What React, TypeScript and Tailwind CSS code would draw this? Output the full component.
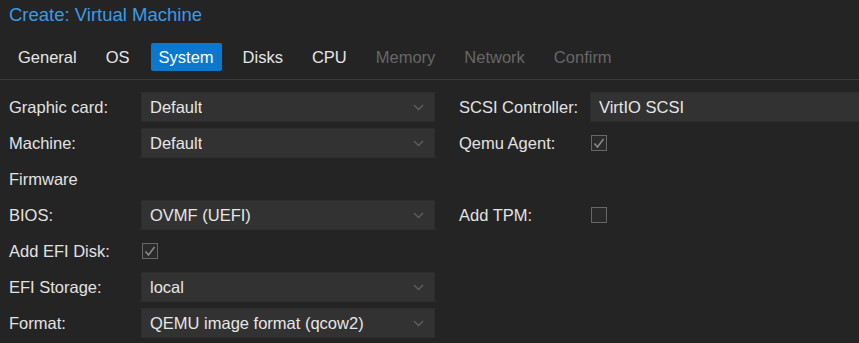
import { ReactNode } from 'react';

const tabs = [
  { label: 'General', state: 'normal' },
  { label: 'OS', state: 'normal' },
  { label: 'System', state: 'active' },
  { label: 'Disks', state: 'normal' },
  { label: 'CPU', state: 'normal' },
  { label: 'Memory', state: 'disabled' },
  { label: 'Network', state: 'disabled' },
  { label: 'Confirm', state: 'disabled' },
];

function Chevron() {
  return (
    <svg width="11" height="7" viewBox="0 0 11 7" className="flex-shrink-0">
      <polyline points="1,1 5.5,5.5 10,1" fill="none" stroke="#5f5f5f" strokeWidth="1.3" />
    </svg>
  );
}

function Select({ value, chevron = true }: { value: string; chevron?: boolean }) {
  return (
    <div className="w-[294px] h-[30px] bg-[#323232] border border-[#2d2d2d] flex items-center justify-between pl-[8px] pr-[10px]">
      <span className="text-[16.5px] text-[#e6e6e6] truncate">{value}</span>
      {chevron && <Chevron />}
    </div>
  );
}

function Checkbox({ checked }: { checked: boolean }) {
  return (
    <div className="w-[16px] h-[16px] border border-[#676767] bg-[#2a2a2a] flex items-center justify-center ml-[1px]">
      {checked && (
        <svg width="14" height="14" viewBox="0 0 14 14">
          <polyline points="2.5,7.5 5.5,11 11.5,3" fill="none" stroke="#8c8c8c" strokeWidth="1.5" />
        </svg>
      )}
    </div>
  );
}

function Label({ children, right = false }: { children: ReactNode; right?: boolean }) {
  return (
    <div className={`h-[30px] flex items-center text-[16.5px] text-[#e2e2e2] ${right ? 'pl-[24px]' : ''}`}>
      {children}
    </div>
  );
}

function Cell({ children }: { children?: ReactNode }) {
  return <div className="h-[30px] flex items-center">{children}</div>;
}

export default function App() {
  return (
    <div
      className="w-[859px] h-[343px] overflow-hidden bg-[#242424] pl-[9px]"
      style={{ fontFamily: '"Liberation Sans", Arial, sans-serif' }}
    >
      {/* Title */}
      <div className="h-[30px] flex items-center text-[18.5px] text-[#3d9ae6]">Create: Virtual Machine</div>

      {/* Tabs */}
      <div className="-ml-[9px] border-b border-[#3b3b3b] pb-[8px] mt-[13px]">
        <div className="flex items-center gap-[13px] pl-[10px] h-[28px]">
          {tabs.map((t) => (
            <div
              key={t.label}
              className={`h-[28px] px-[8px] flex items-center rounded-[2px] text-[16.5px] ${
                t.state === 'active'
                  ? 'bg-[#0b78d0] text-white'
                  : t.state === 'disabled'
                  ? 'text-[#676767]'
                  : 'text-[#e6e6e6]'
              }`}
            >
              {t.label}
            </div>
          ))}
        </div>
      </div>

      {/* Form */}
      <div className="grid grid-cols-[132px_294px_155px_294px] gap-y-[6px] mt-[12px]">
        <Label>Graphic card:</Label>
        <Select value="Default" />
        <Label right>SCSI Controller:</Label>
        <Select value="VirtIO SCSI" chevron={false} />

        <Label>Machine:</Label>
        <Select value="Default" />
        <Label right>Qemu Agent:</Label>
        <Cell>
          <Checkbox checked />
        </Cell>

        <Label>Firmware</Label>
        <Cell />
        <Cell />
        <Cell />

        <Label>BIOS:</Label>
        <Select value="OVMF (UEFI)" />
        <Label right>Add TPM:</Label>
        <Cell>
          <Checkbox checked={false} />
        </Cell>

        <Label>Add EFI Disk:</Label>
        <Cell>
          <Checkbox checked />
        </Cell>
        <Cell />
        <Cell />

        <Label>EFI Storage:</Label>
        <Select value="local" />
        <Cell />
        <Cell />

        <Label>Format:</Label>
        <Select value="QEMU image format (qcow2)" />
        <Cell />
        <Cell />
      </div>
    </div>
  );
}
